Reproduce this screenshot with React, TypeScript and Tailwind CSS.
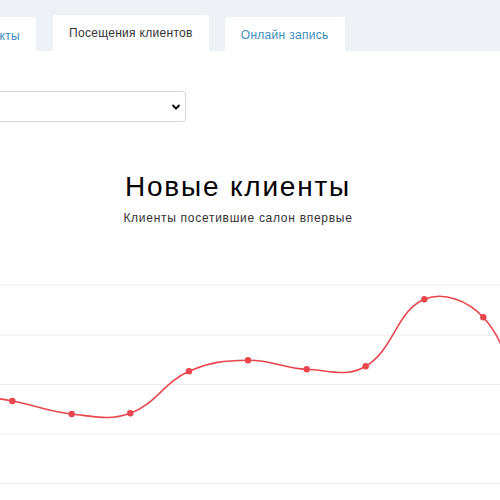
import React from "react";

type P = [number, number];

const OFF = 270;
const pts: P[] = [
  [-46.7, 392],
  [12.3, 401],
  [71.7, 414],
  [130.3, 413.3],
  [189, 371.3],
  [248, 360.3],
  [306.7, 369.3],
  [365.7, 366.3],
  [424.3, 299.3],
  [483.3, 317.3],
  [542.3, 430],
  [601.3, 440],
].map(([x, y]) => [x, y - OFF] as P);

function spline(prev: P, cur: P, next: P, t: number) {
  const d01 = Math.hypot(cur[0] - prev[0], cur[1] - prev[1]);
  const d12 = Math.hypot(next[0] - cur[0], next[1] - cur[1]);
  let s01 = d01 / (d01 + d12);
  let s12 = d12 / (d01 + d12);
  s01 = isNaN(s01) ? 0 : s01;
  s12 = isNaN(s12) ? 0 : s12;
  const fa = t * s01;
  const fb = t * s12;
  return {
    p: [cur[0] - fa * (next[0] - prev[0]), cur[1] - fa * (next[1] - prev[1])] as P,
    n: [cur[0] + fb * (next[0] - prev[0]), cur[1] + fb * (next[1] - prev[1])] as P,
  };
}

function buildPath(points: P[], t = 0.4) {
  const cps = points.map((c, i) => {
    const prev = points[Math.max(0, i - 1)];
    const next = points[Math.min(points.length - 1, i + 1)];
    return spline(prev, c, next, t);
  });
  let d = `M ${points[0][0]} ${points[0][1]}`;
  for (let i = 1; i < points.length; i++) {
    const a = cps[i - 1].n;
    const b = cps[i].p;
    const c = points[i];
    d += ` C ${a[0].toFixed(2)} ${a[1].toFixed(2)} ${b[0].toFixed(2)} ${b[1].toFixed(2)} ${c[0]} ${c[1]}`;
  }
  return d;
}

const grid = [285, 335, 384.5, 434, 483.5].map((y) => y - OFF);

export default function App() {
  const d = buildPath(pts);
  return (
    <div
      className="w-[500px] h-[500px] overflow-hidden bg-white"
      style={{ fontFamily: '"Liberation Sans", Arial, sans-serif' }}
    >
      <div className="h-[51px] bg-[#eef2f6] flex items-end gap-[17px]">
        <div className="ml-[-60px] h-[34px] w-[96px] bg-white rounded-t-[3px] flex justify-end pr-[16px] pt-[12px] text-[12px] leading-[14px] tracking-[0.3px] text-[#3c8dbc] whitespace-nowrap">
          Продукты
        </div>
        <div className="h-[36px] bg-white rounded-t-[3px] px-[16px] pt-[11px] text-[12px] leading-[14px] tracking-[0.3px] text-[#333] whitespace-nowrap">
          Посещения клиентов
        </div>
        <div className="h-[34px] bg-white rounded-t-[3px] px-[16px] pt-[11px] ml-[-1px] text-[12px] leading-[14px] tracking-[0.3px] text-[#3c8dbc] whitespace-nowrap">
          Онлайн запись
        </div>
      </div>

      <div className="mt-[40px] ml-[-20px] w-[206px] h-[31px] border border-[#d6d6d6] rounded-[3px] flex items-center justify-end pr-[4px]">
        <svg width="10" height="8" viewBox="0 0 10 8">
          <path d="M1.5 2 L5 5.5 L8.5 2" fill="none" stroke="#111" strokeWidth="2" />
        </svg>
      </div>

      <div className="mt-[48px] ml-[-24px] flex flex-col items-center">
        <div className="text-[28px] leading-[34px] tracking-[1.8px] text-black whitespace-nowrap">Новые клиенты</div>
        <div className="mt-[6px] text-[12px] leading-[16px] tracking-[0.72px] text-[#333] whitespace-nowrap">
          Клиенты посетившие салон впервые
        </div>
      </div>

      <svg className="mt-[44px] block" width="500" height="230" viewBox="0 0 500 230">
        {grid.map((y) => (
          <line key={y} x1="0" x2="500" y1={y} y2={y} stroke="#ececec" strokeWidth="1" />
        ))}
        <path d={d} fill="none" stroke="#e8454d" strokeWidth="1.6" />
        {pts.map(([x, y], i) => (
          <circle key={i} cx={x} cy={y} r="3.2" fill="#e8454d" />
        ))}
      </svg>
    </div>
  );
}
